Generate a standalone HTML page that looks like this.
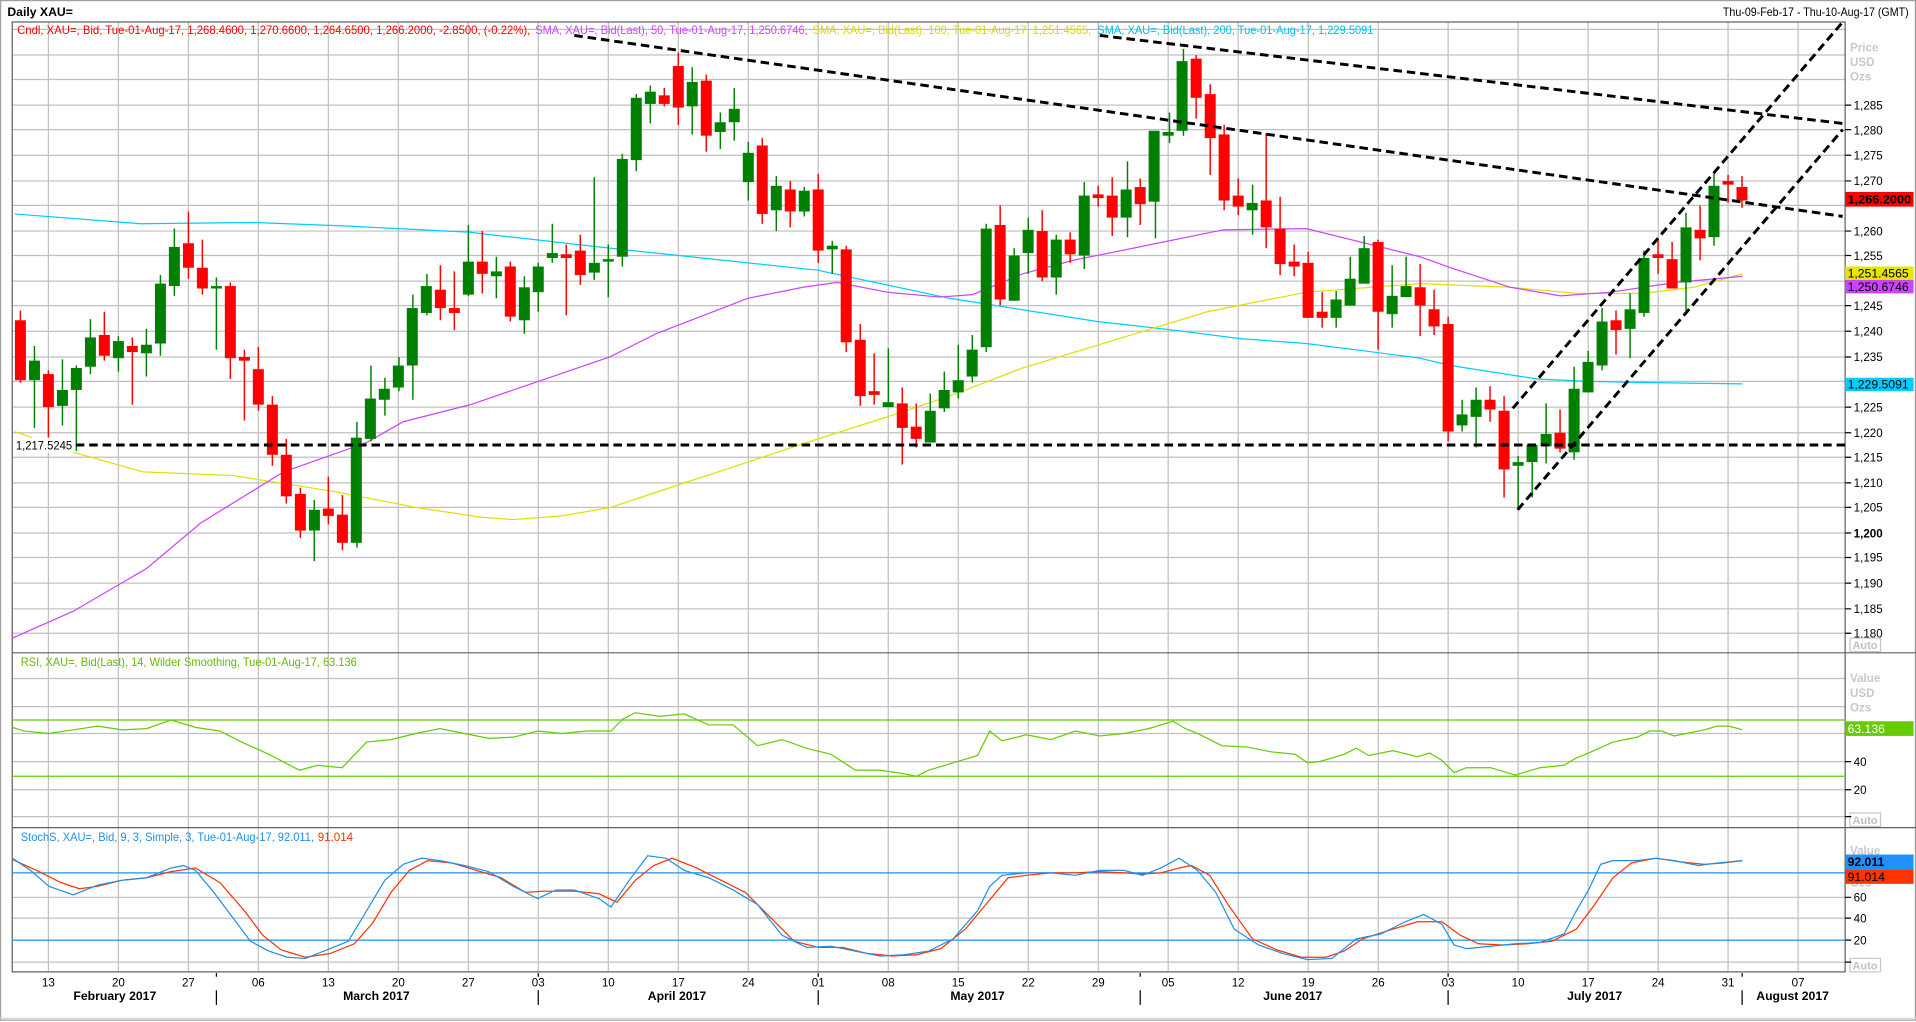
<!DOCTYPE html>
<html><head><meta charset="utf-8"><style>
html,body{margin:0;padding:0;background:#fff;width:1916px;height:1022px;overflow:hidden}
svg{display:block}
text{font-family:"Liberation Sans",sans-serif}
</style></head><body>
<svg width="1916" height="1022" viewBox="0 0 1568 836" preserveAspectRatio="none" xmlns="http://www.w3.org/2000/svg">
<rect x="0" y="0" width="1568" height="836" fill="#fff"/>
<rect x="0.5" y="0.5" width="1567" height="834" fill="none" stroke="#a0a0a0"/>
<text x="6" y="13" font-size="10" font-weight="bold" fill="#000">Daily XAU=</text>
<text x="1562" y="13" font-size="9.5" fill="#000" text-anchor="end" textLength="152" lengthAdjust="spacingAndGlyphs">Thu-09-Feb-17 - Thu-10-Aug-17 (GMT)</text>
<!-- grids -->
<g stroke="#c0c0c0" stroke-width="1">
<path d="M10 24H1510M10 45H1510M10 65H1510M10 86H1510M10 106H1510M10 127H1510M10 148H1510M10 168H1510M10 189H1510M10 209H1510M10 230H1510M10 250H1510M10 271H1510M10 292H1510M10 312H1510M10 333H1510M10 354H1510M10 374H1510M10 395H1510M10 415H1510M10 436H1510M10 456H1510M10 477H1510M10 498H1510M10 518H1510"/>
<path d="M10 555H1510M10 578H1510M10 600H1510M10 623H1510M10 646H1510M10 668H1510"/>
<path d="M10 734H1510M10 751H1510M10 787H1510"/>
<path d="M39.6 18V795M96.9 18V795M154.2 18V795M211.4 18V795M268.7 18V795M326 18V795M383.3 18V795M440.5 18V795M497.8 18V795M555.1 18V795M612.4 18V795M669.6 18V795M726.9 18V795M784.2 18V795M841.5 18V795M898.8 18V795M956 18V795M1013.3 18V795M1070.6 18V795M1127.9 18V795M1185.1 18V795M1242.4 18V795M1299.7 18V795M1357 18V795M1414.2 18V795M1471.5 18V795"/>
</g>
<!-- panel frames -->
<g stroke="#606060" stroke-width="1" fill="none">
<rect x="10" y="18" width="1500" height="777"/>
<path d="M10 534H1568M10 677H1568"/>
</g>
<!-- header -->
<text x="14" y="28" font-size="9.5" fill="#ff0000" textLength="420" lengthAdjust="spacingAndGlyphs">Cndl, XAU=, Bid, Tue-01-Aug-17, 1,268.4600, 1,270.6600, 1,264.6500, 1,266.2000, -2.8500, (-0.22%),</text>
<text x="438" y="28" font-size="9.5" fill="#cc44ff" textLength="223" lengthAdjust="spacingAndGlyphs">SMA, XAU=, Bid(Last),  50, Tue-01-Aug-17, 1,250.6746,</text>
<text x="665" y="28" font-size="9.5" fill="#d8d800" textLength="228" lengthAdjust="spacingAndGlyphs">SMA, XAU=, Bid(Last),  100, Tue-01-Aug-17, 1,251.4565,</text>
<text x="898" y="28" font-size="9.5" fill="#00c0ee" textLength="226" lengthAdjust="spacingAndGlyphs">SMA, XAU=, Bid(Last),  200, Tue-01-Aug-17, 1,229.5091</text>
<!-- SMAs -->
<g fill="none" stroke-width="1">
<polyline stroke="#00ccff" points="12,175 115,183 207,182 286,185 385,190 393,191 499,203 612,215 669,221 777,244 898,263 960,270 1015,277 1069,281 1124,288 1162,293 1187,299 1258,310 1300,312 1350,313 1426,314"/>
<polyline stroke="#e0e000" points="12,353 60,370 117,386 191,389 273,402 340,415 393,423 420,425 460,422 500,415 560,395 597,383 657,363 726,341 777,324 837,301 906,280 988,255 1069,239 1162,232 1236,235 1290,240 1345,240 1386,235 1426,224"/>
<polyline stroke="#cc44ff" points="10,522 60,500 120,465 164,428 232,386 300,362 330,345 385,331 499,292 537,273 612,244 657,235 685,231 726,239 769,243 796,241 837,224 878,213 947,199 1001,188 1069,187 1162,210 1187,219 1236,235 1277,242 1318,239 1372,231 1426,226"/>
</g>
<!-- candles -->
<path stroke="#ff0000" stroke-width="1.2" fill="none" d="M16.7 254V313M39.6 303V358M85.4 255V295M108.3 276V331M154.2 173V228M165.6 196V241M188.5 231V310M200 286V344M211.4 284V336M222.9 324V381M234.3 359V412M245.8 399V440M268.7 390V429M280.2 405V450M360.4 217V262M371.8 222V270M394.7 189V240M417.6 214V263M463.4 200V258M474.9 192V233M543.6 72V87M555.1 43V102M578 61V124M623.8 113V183M646.7 148V186M669.6 142V215M692.5 201V288M704 265V332M715.4 289V331M738.4 317V380M749.8 330V366M818.5 168V250M852.9 172V230M875.8 190V215M898.7 152V169M910.2 145V193M933.1 146V184M978.9 45V97M990.4 69V143M1001.8 102V172M1013.3 146V176M1036.2 109V203M1047.6 161V225M1059.1 200V226M1070.6 206V260M1082 239V268M1127.8 196V286M1162.2 216V275M1173.6 237V274M1185.1 259V361M1219.4 316V345M1230.9 324V407M1276.7 335V370M1322.5 254V290M1356.9 195V224M1368.4 198V236M1391.3 168V213M1414.2 143V166M1425.6 144V170"/>
<path stroke="#008000" stroke-width="1.2" fill="none" d="M28.2 283V350M51.1 294V348M62.5 299V369M74 261V306M96.9 275V304M119.8 269V308M131.3 225V291M142.7 187V242M177.1 227V286M257.2 409V459M292.1 345V448M303.6 299V361M315 309V340M326.5 292V320M337.9 241V327M349.4 224V258M383.3 184V242M406.2 210V244M429.1 226V273M440.5 215V255M452 183V215M486.3 145V229M497.8 200V243M509.3 126V218M520.7 77V140M532.2 70V101M566.5 55V110M589.5 92V122M600.9 72V115M612.4 116V164M635.3 144V189M658.2 153V177M681.1 197V224M727 285V333M761.3 322V362M772.8 304V337M784.2 282V326M795.7 274V313M807.1 183V288M830 203V246M841.5 178V224M864.4 192V241M887.3 149V220M922.7 132V194M945.6 107V195M957.1 92V117M968.5 40V111M1025.1 151V192M1093.5 238V268M1105 210V250M1116.4 193V232M1139.3 217V268M1150.7 210V243M1196.6 327V353M1208 317V366M1242.4 373V417M1253.9 364V407M1265.3 330V379M1288.2 300V376M1299.7 287V321M1311.1 252V303M1334 240V293M1345.4 205V259M1379.8 174V257M1402.7 142V201"/>
<g fill="#ff0000">
<rect x="12.2" y="262" width="9" height="49"/><rect x="35.1" y="306" width="9" height="27"/><rect x="80.9" y="274" width="9" height="17"/><rect x="103.8" y="283" width="9" height="5"/><rect x="149.7" y="199" width="9" height="20"/><rect x="161.1" y="219" width="9" height="17"/><rect x="184" y="234" width="9" height="59"/><rect x="195.5" y="292" width="9" height="3"/><rect x="206.9" y="302" width="9" height="29"/><rect x="218.4" y="331" width="9" height="41"/><rect x="229.8" y="372" width="9" height="34"/><rect x="241.3" y="404" width="9" height="30"/><rect x="264.2" y="416" width="9" height="6"/><rect x="275.7" y="421" width="9" height="23"/><rect x="355.9" y="237" width="9" height="15"/><rect x="367.3" y="252" width="9" height="4"/><rect x="390.2" y="214" width="9" height="10"/><rect x="413.1" y="218" width="9" height="41"/><rect x="458.9" y="208" width="9" height="3"/><rect x="470.4" y="205" width="9" height="20"/><rect x="539.1" y="78" width="9" height="7"/><rect x="550.6" y="54" width="9" height="34"/><rect x="573.5" y="66" width="9" height="45"/><rect x="619.3" y="119" width="9" height="56"/><rect x="642.2" y="155" width="9" height="18"/><rect x="665.1" y="155" width="9" height="50"/><rect x="688" y="204" width="9" height="76"/><rect x="699.5" y="278" width="9" height="46"/><rect x="710.9" y="320" width="9" height="3"/><rect x="733.9" y="330" width="9" height="20"/><rect x="745.3" y="349" width="9" height="10"/><rect x="814" y="184" width="9" height="61"/><rect x="848.4" y="189" width="9" height="38"/><rect x="871.3" y="196" width="9" height="12"/><rect x="894.2" y="159" width="9" height="3"/><rect x="905.7" y="160" width="9" height="18"/><rect x="928.6" y="153" width="9" height="14"/><rect x="974.4" y="48" width="9" height="32"/><rect x="985.9" y="77" width="9" height="36"/><rect x="997.3" y="110" width="9" height="54"/><rect x="1008.8" y="160" width="9" height="9"/><rect x="1031.7" y="164" width="9" height="22"/><rect x="1043.1" y="187" width="9" height="29"/><rect x="1054.6" y="214" width="9" height="4"/><rect x="1066" y="215" width="9" height="45"/><rect x="1077.5" y="255" width="9" height="5"/><rect x="1123.3" y="198" width="9" height="57"/><rect x="1157.7" y="235" width="9" height="15"/><rect x="1169.1" y="253" width="9" height="14"/><rect x="1180.6" y="265" width="9" height="88"/><rect x="1214.9" y="327" width="9" height="8"/><rect x="1226.4" y="336" width="9" height="48"/><rect x="1272.2" y="354" width="9" height="13"/><rect x="1318" y="262" width="9" height="8"/><rect x="1352.4" y="208" width="9" height="3"/><rect x="1363.9" y="212" width="9" height="24"/><rect x="1386.8" y="188" width="9" height="7"/><rect x="1409.7" y="148" width="9" height="3"/><rect x="1421.1" y="153" width="9" height="11"/>
</g>
<g fill="#008000">
<rect x="23.7" y="295" width="9" height="16"/><rect x="46.6" y="319" width="9" height="13"/><rect x="58" y="301" width="9" height="18"/><rect x="69.5" y="276" width="9" height="24"/><rect x="92.4" y="279" width="9" height="14"/><rect x="115.3" y="282" width="9" height="7"/><rect x="126.8" y="232" width="9" height="49"/><rect x="138.2" y="202" width="9" height="32"/><rect x="172.6" y="234" width="9" height="2"/><rect x="252.8" y="417" width="9" height="17"/><rect x="287.1" y="358" width="9" height="86"/><rect x="298.6" y="326" width="9" height="33"/><rect x="310" y="318" width="9" height="9"/><rect x="321.5" y="299" width="9" height="18"/><rect x="332.9" y="252" width="9" height="47"/><rect x="344.4" y="234" width="9" height="22"/><rect x="378.8" y="214" width="9" height="27"/><rect x="401.7" y="222" width="9" height="4"/><rect x="424.6" y="235" width="9" height="27"/><rect x="436" y="218" width="9" height="21"/><rect x="447.5" y="207" width="9" height="4"/><rect x="481.9" y="215" width="9" height="8"/><rect x="493.3" y="212" width="9" height="2"/><rect x="504.8" y="130" width="9" height="80"/><rect x="516.2" y="80" width="9" height="51"/><rect x="527.7" y="75" width="9" height="10"/><rect x="562" y="67" width="9" height="20"/><rect x="584.9" y="100" width="9" height="8"/><rect x="596.4" y="89" width="9" height="11"/><rect x="607.9" y="125" width="9" height="24"/><rect x="630.8" y="152" width="9" height="20"/><rect x="653.7" y="156" width="9" height="17"/><rect x="676.6" y="201" width="9" height="3"/><rect x="722.4" y="329" width="9" height="4"/><rect x="756.8" y="336" width="9" height="26"/><rect x="768.2" y="319" width="9" height="15"/><rect x="779.7" y="311" width="9" height="10"/><rect x="791.1" y="286" width="9" height="22"/><rect x="802.6" y="187" width="9" height="97"/><rect x="825.5" y="209" width="9" height="37"/><rect x="836.9" y="188" width="9" height="19"/><rect x="859.9" y="196" width="9" height="31"/><rect x="882.8" y="160" width="9" height="49"/><rect x="917.1" y="155" width="9" height="23"/><rect x="940" y="107" width="9" height="58"/><rect x="951.5" y="108" width="9" height="3"/><rect x="962.9" y="50" width="9" height="57"/><rect x="1020.2" y="166" width="9" height="6"/><rect x="1088.9" y="245" width="9" height="15"/><rect x="1100.4" y="228" width="9" height="22"/><rect x="1111.9" y="203" width="9" height="29"/><rect x="1134.8" y="242" width="9" height="15"/><rect x="1146.2" y="234" width="9" height="9"/><rect x="1192" y="339" width="9" height="9"/><rect x="1203.5" y="327" width="9" height="14"/><rect x="1237.9" y="378" width="9" height="3"/><rect x="1249.3" y="364" width="9" height="14"/><rect x="1260.8" y="355" width="9" height="10"/><rect x="1283.7" y="318" width="9" height="52"/><rect x="1295.1" y="296" width="9" height="25"/><rect x="1306.6" y="263" width="9" height="36"/><rect x="1329.5" y="253" width="9" height="16"/><rect x="1340.9" y="211" width="9" height="45"/><rect x="1375.3" y="186" width="9" height="45"/><rect x="1398.2" y="152" width="9" height="42"/>
</g>
<!-- dashed trend lines -->
<g stroke="#000" stroke-width="2.4" stroke-dasharray="7,4" fill="none">
<path d="M62 364H1510"/>
<path d="M470 29L1508 177"/>
<path d="M900 29L1508 101"/>
<path d="M1238 334L1508 18"/>
<path d="M1242 417L1508 106"/>
</g>
<rect x="11" y="358" width="50" height="12" fill="#fff"/>
<text x="13" y="367.5" font-size="9.5" fill="#000" textLength="46" lengthAdjust="spacingAndGlyphs">1,217.5245</text>
<!-- right axis main -->
<g font-size="9.5" fill="#000">
<path stroke="#000" d="M1510 86h5M1510 106h5M1510 127h5M1510 148h5M1510 168h5M1510 189h5M1510 209h5M1510 230h5M1510 250h5M1510 271h5M1510 292h5M1510 312h5M1510 333h5M1510 354h5M1510 374h5M1510 395h5M1510 415h5M1510 436h5M1510 456h5M1510 477h5M1510 498h5M1510 518h5"/>
<text x="1517" y="89.5">1,285</text><text x="1517" y="110">1,280</text><text x="1517" y="130.5">1,275</text><text x="1517" y="151.5">1,270</text><text x="1517" y="192.5">1,260</text><text x="1517" y="212.5">1,255</text><text x="1517" y="253.5">1,245</text><text x="1517" y="274.5">1,240</text><text x="1517" y="295.5">1,235</text><text x="1517" y="336.5">1,225</text><text x="1517" y="357.5">1,220</text><text x="1517" y="377.5">1,215</text><text x="1517" y="398.5">1,210</text><text x="1517" y="418.5">1,205</text><text x="1517" y="439.5" font-weight="bold">1,200</text><text x="1517" y="459.5">1,195</text><text x="1517" y="480.5">1,190</text><text x="1517" y="501.5">1,185</text><text x="1517" y="521.5">1,180</text>
</g>
<g font-size="9.5" font-weight="bold" fill="#c8c8c8">
<text x="1514" y="42">Price</text><text x="1514" y="54">USD</text><text x="1514" y="66">Ozs</text>
<text x="1514" y="558">Value</text><text x="1514" y="570">USD</text><text x="1514" y="582">Ozs</text>
<text x="1514" y="699">Value</text><text x="1514" y="725">Ozs</text>
</g>
<g font-size="9" fill="#c0c0c0" font-weight="bold">
<rect x="1514" y="522" width="25" height="11" fill="#fff" stroke="#c8c8c8"/><text x="1516" y="531">Auto</text>
<rect x="1514" y="665" width="25" height="11" fill="#fff" stroke="#c8c8c8"/><text x="1516" y="674">Auto</text>
<rect x="1514" y="784" width="25" height="11" fill="#fff" stroke="#c8c8c8"/><text x="1516" y="793">Auto</text>
</g>
<rect x="1510" y="157" width="56" height="12" fill="#ff0000"/>
<text x="1512" y="166.5" font-size="10" font-weight="bold" fill="#000" textLength="52" lengthAdjust="spacingAndGlyphs">1,266.2000</text>
<rect x="1510" y="218" width="56" height="11" fill="#e6e600"/>
<text x="1512" y="227" font-size="9.5" fill="#000" textLength="50" lengthAdjust="spacingAndGlyphs">1,251.4565</text>
<rect x="1510" y="229" width="56" height="11" fill="#cc44ff"/>
<text x="1512" y="238" font-size="9.5" fill="#000" textLength="50" lengthAdjust="spacingAndGlyphs">1,250.6746</text>
<rect x="1510" y="309" width="56" height="11" fill="#00ccff"/>
<text x="1512" y="318" font-size="9.5" fill="#000" textLength="50" lengthAdjust="spacingAndGlyphs">1,229.5091</text>
<!-- RSI -->
<text x="17" y="545" font-size="9.5" fill="#66bb00" textLength="275" lengthAdjust="spacingAndGlyphs">RSI, XAU=, Bid(Last),  14, Wilder Smoothing, Tue-01-Aug-17, 63.136</text>
<path stroke="#66cc00" d="M10 589H1510M10 635H1510"/>
<polyline fill="none" stroke="#66cc00" points="10,595 20,598 40,600 60,597 80,594 100,597 120,596 140,589 160,595 180,598 200,608 220,617 245,630 260,626 280,628 300,607 320,605 340,600 360,596 380,600 400,604 420,603 440,598 460,600 480,598 500,598 510,588 520,583 540,586 560,584 580,593 600,593 620,610 640,605 660,612 680,617 700,630 720,630 740,633 750,635 760,630 780,624 800,618 810,598 820,606 840,601 860,605 880,598 900,602 920,600 940,596 960,590 970,596 980,600 1000,610 1020,611 1040,615 1060,617 1070,624 1080,623 1100,617 1110,612 1120,618 1140,614 1160,619 1170,616 1180,622 1190,632 1200,628 1220,628 1240,634 1260,628 1280,626 1290,620 1300,616 1320,607 1340,603 1350,598 1360,598 1370,602 1380,600 1395,597 1405,594 1415,594 1426,597"/>
<g font-size="9.5" fill="#000"><path stroke="#000" d="M1510 623h5M1510 646h5M1510 668h5M1510 751h5M1510 734h5M1510 769h5M1510 787h5"/>
<text x="1517" y="626.5">40</text><text x="1517" y="649.5">20</text>
<text x="1517" y="737.5">60</text><text x="1517" y="754.5">40</text><text x="1517" y="772.5">20</text></g>
<rect x="1510" y="590" width="56" height="12" fill="#66cc00"/>
<text x="1512" y="599.5" font-size="10" fill="#fff">63.136</text>
<!-- Stoch -->
<text x="17" y="688" font-size="9.5" fill="#1e90e8" textLength="240" lengthAdjust="spacingAndGlyphs">StochS, XAU=, Bid,  9, 3, Simple, 3, Tue-01-Aug-17, 92.011,</text>
<text x="260" y="688" font-size="9.5" fill="#ff3300" textLength="29" lengthAdjust="spacingAndGlyphs">91.014</text>
<path stroke="#1e90e8" d="M10 714H1510M10 769H1510"/>
<polyline fill="none" stroke="#ff3300" points="10,703 30,712 50,722 65,727 80,725 100,720 120,718 140,713 160,710 180,722 200,745 215,765 230,777 250,783 270,780 290,772 305,755 320,730 335,712 350,704 370,706 390,712 410,718 430,730 445,729 470,729 490,731 505,738 520,720 535,708 550,702 570,710 590,720 610,730 630,750 650,770 670,775 690,775 710,780 730,782 750,781 770,776 790,760 810,736 825,718 840,716 860,714 880,714 900,713 920,714 935,715 950,714 965,710 975,708 990,716 1005,740 1025,768 1045,777 1065,783 1085,783 1100,778 1115,768 1140,760 1160,754 1180,754 1195,765 1210,772 1230,773 1250,772 1270,770 1290,760 1305,740 1320,718 1335,706 1355,702 1375,705 1395,707 1410,706 1426,704"/>
<polyline fill="none" stroke="#1e90e8" points="10,702 25,712 40,725 60,732 80,724 100,720 120,718 140,710 150,708 160,712 175,730 190,750 205,770 220,778 235,783 250,784 270,776 285,770 300,745 315,720 330,707 345,702 360,704 380,708 400,713 420,725 440,735 455,728 470,728 490,735 500,742 515,720 530,700 545,702 560,712 580,718 600,728 620,740 640,765 660,775 680,774 700,778 720,782 740,781 760,778 780,768 800,745 810,725 820,716 840,714 860,714 880,716 900,712 920,712 935,716 950,710 965,702 980,712 995,730 1010,760 1030,773 1050,780 1070,785 1090,784 1110,768 1130,764 1150,754 1165,748 1180,756 1190,773 1200,776 1220,774 1240,772 1260,771 1280,764 1290,745 1300,728 1310,707 1320,704 1340,704 1355,702 1370,704 1390,708 1405,706 1426,704"/>
<rect x="1510" y="699" width="56" height="12" fill="#1e90ff"/>
<text x="1512" y="708.5" font-size="10" font-weight="bold" fill="#000">92.011</text>
<rect x="1510" y="711" width="56" height="12" fill="#ff3300"/>
<text x="1512" y="720.5" font-size="10" fill="#000">91.014</text>
<!-- x axis -->
<g font-size="9.5" fill="#000" text-anchor="middle">
<text x="39.6" y="807">13</text><text x="96.9" y="807">20</text><text x="154.2" y="807">27</text><text x="211.4" y="807">06</text><text x="268.7" y="807">13</text><text x="326" y="807">20</text><text x="383.3" y="807">27</text><text x="440.5" y="807">03</text><text x="497.8" y="807">10</text><text x="555.1" y="807">17</text><text x="612.4" y="807">24</text><text x="669.6" y="807">01</text><text x="726.9" y="807">08</text><text x="784.2" y="807">15</text><text x="841.5" y="807">22</text><text x="898.8" y="807">29</text><text x="956" y="807">05</text><text x="1013.3" y="807">12</text><text x="1070.6" y="807">19</text><text x="1127.9" y="807">26</text><text x="1185.1" y="807">03</text><text x="1242.4" y="807">10</text><text x="1299.7" y="807">17</text><text x="1357" y="807">24</text><text x="1414.2" y="807">31</text><text x="1471.5" y="807">07</text>
</g>
<g font-size="10" font-weight="bold" fill="#000" text-anchor="middle">
<text x="94" y="818">February 2017</text><text x="308" y="818">March 2017</text><text x="554" y="818">April 2017</text><text x="800" y="818">May 2017</text><text x="1058" y="818">June 2017</text><text x="1305" y="818">July 2017</text><text x="1467" y="818">August 2017</text>
</g>
<path stroke="#000" d="M177.1 796v3M440.5 796v3M669.6 796v3M933.1 796v3M1185.1 796v3M1425.7 796v3M177.1 810v12M440.5 810v12M669.6 810v12M933.1 810v12M1185.1 810v12M1425.7 810v12"/>
<path stroke="#d8d8d8" d="M0 833H1568"/>
</svg>
</body></html>
